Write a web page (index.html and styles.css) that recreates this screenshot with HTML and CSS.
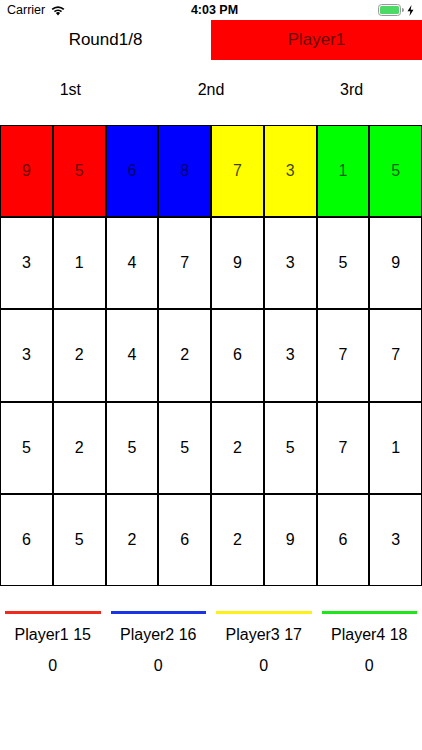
FILE: index.html
```html
<!DOCTYPE html>
<html>
<head>
<meta charset="utf-8">
<link rel="stylesheet" href="styles.css">
</head>
<body>
<div class="status">
  <div class="status-left">
    <span class="carrier">Carrier</span>
    <svg class="wifi" width="14" height="11" viewBox="0 0 14 11">
      <path d="M7 10.5 L4.9 8.1 A3 3 0 0 1 9.1 8.1 Z" fill="#000"/>
      <path d="M2.9 6.1 A5.8 5.8 0 0 1 11.1 6.1 L10 7.3 A4.2 4.2 0 0 0 4 7.3 Z" fill="#000"/>
      <path d="M0.6 3.8 A9.2 9.2 0 0 1 13.4 3.8 L12.2 5 A7.5 7.5 0 0 0 1.8 5 Z" fill="#000"/>
    </svg>
  </div>
  <div class="time">4:03 PM</div>
  <div class="status-right">
    <svg width="26" height="12" viewBox="0 0 26 12">
      <rect x="0.5" y="0.5" width="22" height="11" rx="3" fill="none" stroke="#9a9a9a"/>
      <rect x="2" y="2" width="19" height="8" rx="1.5" fill="#4cd964"/>
      <path d="M24 4 a1.5 1.5 0 0 1 0 4 Z" fill="#9a9a9a"/>
    </svg>
    <svg width="7" height="11" viewBox="0 0 7 11">
      <path d="M4.5 0 L0.5 6.2 H3.3 L2.5 11 L6.5 4.8 H3.7 Z" fill="#000"/>
    </svg>
  </div>
</div>
<div class="header">
  <div class="round">Round1/8</div>
  <div class="turn">Player1</div>
</div>
<div class="ranks">
  <div>1st</div>
  <div>2nd</div>
  <div>3rd</div>
</div>
<div class="board">
  <div class="cell c-red">9</div>
  <div class="cell c-red">5</div>
  <div class="cell c-blue">6</div>
  <div class="cell c-blue">8</div>
  <div class="cell c-yellow">7</div>
  <div class="cell c-yellow">3</div>
  <div class="cell c-green">1</div>
  <div class="cell c-green">5</div>

  <div class="cell">3</div><div class="cell">1</div><div class="cell">4</div><div class="cell">7</div>
  <div class="cell">9</div><div class="cell">3</div><div class="cell">5</div><div class="cell">9</div>

  <div class="cell">3</div><div class="cell">2</div><div class="cell">4</div><div class="cell">2</div>
  <div class="cell">6</div><div class="cell">3</div><div class="cell">7</div><div class="cell">7</div>

  <div class="cell">5</div><div class="cell">2</div><div class="cell">5</div><div class="cell">5</div>
  <div class="cell">2</div><div class="cell">5</div><div class="cell">7</div><div class="cell">1</div>

  <div class="cell">6</div><div class="cell">5</div><div class="cell">2</div><div class="cell">6</div>
  <div class="cell">2</div><div class="cell">9</div><div class="cell">6</div><div class="cell">3</div>
</div>
<div class="players">
  <div class="player">
    <div class="bar b-red"></div>
    <div class="pname">Player1 15</div>
    <div class="pscore">0</div>
  </div>
  <div class="player">
    <div class="bar b-blue"></div>
    <div class="pname">Player2 16</div>
    <div class="pscore">0</div>
  </div>
  <div class="player">
    <div class="bar b-yellow"></div>
    <div class="pname">Player3 17</div>
    <div class="pscore">0</div>
  </div>
  <div class="player">
    <div class="bar b-green"></div>
    <div class="pname">Player4 18</div>
    <div class="pscore">0</div>
  </div>
</div>
</body>
</html>
```
FILE: styles.css
```css
html, body {
  margin: 0;
  padding: 0;
  background: #fff;
}
body {
  width: 422px;
  height: 750px;
  font-family: "Liberation Sans", Arial, sans-serif;
  color: #000;
  overflow: hidden;
}
.status {
  height: 20px;
  display: flex;
  align-items: center;
  justify-content: space-between;
  font-size: 12px;
}
.status-left {
  display: flex;
  align-items: center;
  gap: 6px;
  padding-left: 7px;
  width: 120px;
}
.carrier {
  font-size: 12.5px;
}
.time {
  font-weight: bold;
  font-size: 12.5px;
}
.status-right {
  width: 120px;
  display: flex;
  justify-content: flex-end;
  align-items: center;
  gap: 3px;
  padding-right: 8px;
  box-sizing: border-box;
}
.header {
  display: flex;
  height: 40px;
}
.header > div {
  flex: 1;
  display: flex;
  align-items: center;
  justify-content: center;
  font-size: 17px;
}
.turn {
  background: #ff0000;
  color: rgba(0, 0, 0, 0.62);
}
.ranks {
  display: flex;
  height: 65px;
  box-sizing: border-box;
  padding-top: 20px;
}
.ranks > div {
  flex: 1;
  text-align: center;
  font-size: 16px;
  line-height: 20px;
}
.board {
  display: grid;
  grid-template-columns: repeat(8, 1fr);
  grid-template-rows: repeat(5, 1fr);
  height: 461px;
  box-sizing: border-box;
  gap: 2px;
  padding: 1px;
  background: #000;
}
.cell {
  background: #fff;
  display: flex;
  align-items: center;
  justify-content: center;
  font-size: 16px;
}
.c-red { background: #ff0000; color: rgba(0,0,0,0.6); }
.c-blue { background: #0000ff; color: rgba(0,0,0,0.6); }
.c-yellow { background: #ffff00; color: rgba(0,0,0,0.75); }
.c-green { background: #00ff00; color: rgba(0,0,0,0.65); }
.players {
  display: flex;
  padding-top: 25px;
}
.player {
  flex: 1;
  padding: 0 5px;
  display: flex;
  flex-direction: column;
  align-items: center;
}
.bar {
  align-self: stretch;
  height: 3px;
}
.b-red { background: #ee2b1c; }
.b-blue { background: #1a33e6; }
.b-yellow { background: #fff01a; }
.b-green { background: #1ee61a; }
.pname {
  margin-top: 11px;
  font-size: 16px;
  line-height: 20px;
}
.pscore {
  margin-top: 11px;
  font-size: 16px;
  line-height: 20px;
}
```
